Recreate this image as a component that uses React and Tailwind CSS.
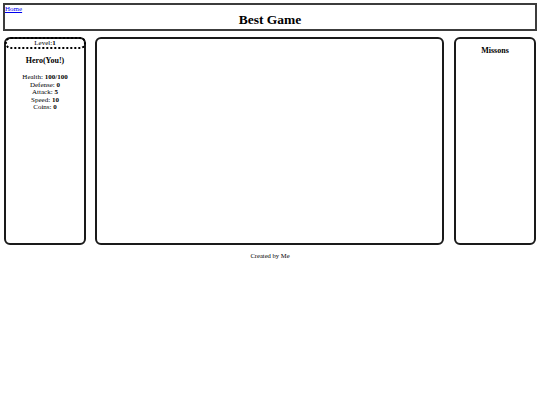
export default function App() {
  const stats = [
    ["Health", "100/100"],
    ["Defense", "0"],
    ["Attack", "5"],
    ["Speed", "10"],
    ["Coins", "0"],
  ];

  return (
    <div className="w-[540px] h-[405px] bg-white text-black font-['Liberation_Serif',serif]">
      {/* Header */}
      <header className="mx-[3px] mt-[3px] h-[28px] border-2 border-[#3c3c3c]">
        <a href="#" className="block text-[7px] leading-[8px] text-[#0000ee] underline">
          Home
        </a>
        <h1 className="text-center font-bold text-[13.5px] leading-[14px]">Best Game</h1>
      </header>

      {/* Game area */}
      <main className="flex mt-[6px] ml-[4px] h-[208px]">
        <aside className="w-[82px] border-2 border-[#1a1a1a] rounded-[6px] flex flex-col items-center">
          <div className="w-[81px] shrink-0 -mt-[2px] h-[12px] border-2 border-dotted border-black rounded-full flex items-center justify-center text-[7px] leading-none">
            Level:<b>1</b>
          </div>
          <h2 className="mt-[7px] font-bold text-[8px] leading-[10px]">Hero(You!)</h2>
          <ul className="mt-[8px] text-[7px] leading-[7.5px] text-center">
            {stats.map(([label, value]) => (
              <li key={label}>
                {label}: <b>{value}</b>
              </li>
            ))}
          </ul>
        </aside>

        <section className="ml-[9px] w-[349px] border-2 border-[#1a1a1a] rounded-[6px]"></section>

        <aside className="ml-[10px] w-[82px] border-2 border-[#1a1a1a] rounded-[6px]">
          <h3 className="mt-[7px] text-center font-bold text-[8px] leading-[10px]">Missons</h3>
        </aside>
      </main>

      <footer className="mt-[7px] text-center text-[6.6px] leading-[8px]">Created by Me</footer>
    </div>
  );
}
